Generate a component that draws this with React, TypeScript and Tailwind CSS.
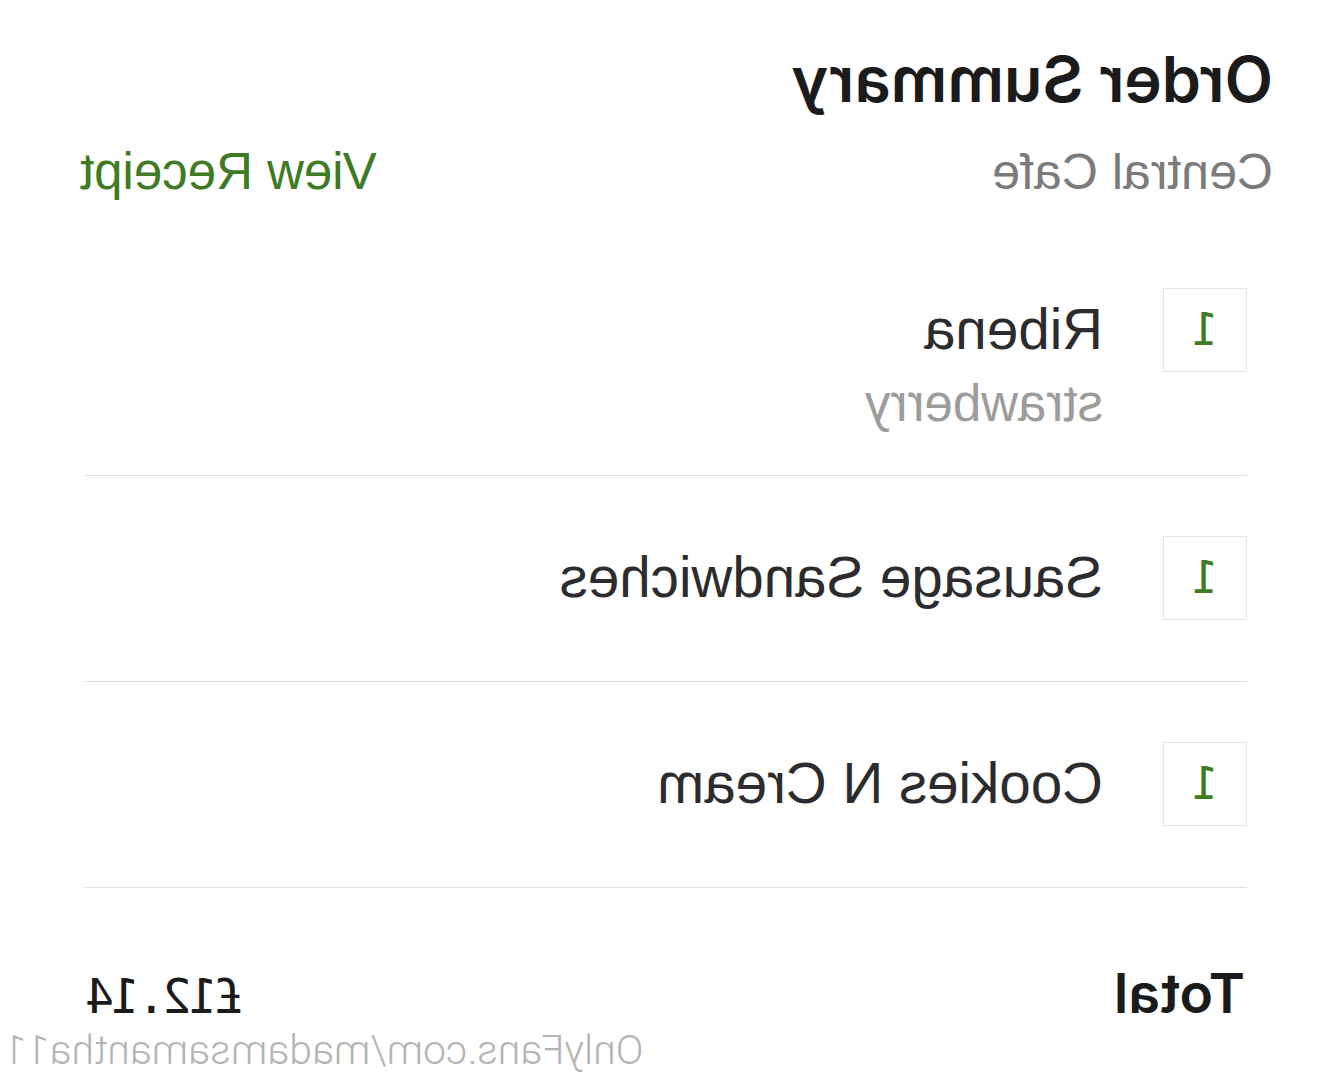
const items = [
  { qty: 1, name: 'Ribena', option: 'strawberry' },
  { qty: 1, name: 'Sausage Sandwiches' },
  { qty: 1, name: 'Cookies N Cream' },
];

// the captured screen is mirrored, so the whole page is flipped on x
export default function App() {
  return (
    <div className="w-[1333px] h-[1080px] overflow-hidden bg-white -scale-x-100 font-['Liberation_Sans',Arial,sans-serif]">
      <div className="pt-[47px] pl-[60px] pr-[80px]">
        <h1 className="text-[63px] leading-[64px] font-semibold text-[#1b1b1b] font-['Inter',sans-serif]">Order Summary</h1>
        <div className="mt-[36px] flex items-baseline justify-between">
          <span className="text-[50px] leading-[50px] text-[#7b7b7b]">Central Cafe</span>
          <span className="text-[51px] leading-[50px] text-[#3f7a24]">View Receipt</span>
        </div>
      </div>

      <div className="mt-[31px] ml-[86px] mr-[85px]">
        {items.map((item, index) => (
          <div
            key={index}
            className={`flex items-start gap-[60px] pt-[60px] border-b border-[#dfdfdf] ${item.option ? 'pb-[46px]' : 'pb-[61px]'}`}
          >
            <div className="w-[84px] h-[84px] shrink-0 border border-[#e8e8e8] flex items-center justify-center">
              <span className="text-[44px] leading-none text-[#3f7a24] font-['DejaVu_Sans_Mono',monospace]">{item.qty}</span>
            </div>
            <div className="flex flex-col">
              <span className="text-[56.5px] leading-[84px] text-[#2c2c2e]">{item.name}</span>
              {item.option && (
                <span className="mt-[7px] text-[51px] leading-[50px] text-[#9c9c9c]">{item.option}</span>
              )}
            </div>
          </div>
        ))}

        <div className="mt-[78px] pl-[2px] pr-[3px] flex items-baseline justify-between">
          <span className="text-[55px] leading-[54px] font-semibold text-[#1b1b1b] font-['Inter',sans-serif]">Total</span>
          <span className="text-[48px] leading-[54px] tracking-[-3px] text-[#1b1b1b] font-['DejaVu_Sans_Mono',monospace]">£12.14</span>
        </div>
      </div>

      <div className="mt-[7px] pr-[4px] text-right text-[41px] leading-[40px] font-light text-[#b4b4b4] font-['Roboto',sans-serif]">
        OnlyFans.com/madamsamantha11
      </div>
    </div>
  );
}
